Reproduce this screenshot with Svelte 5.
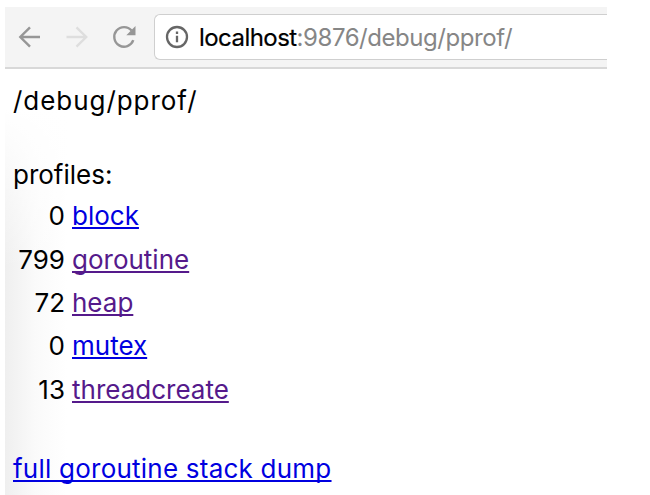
<script lang="ts">
    const host = "localhost";
    const path = ":9876/debug/pprof/";

    const profiles = [
        { name: "block", count: 0, visited: false },
        { name: "goroutine", count: 799, visited: true },
        { name: "heap", count: 72, visited: true },
        { name: "mutex", count: 0, visited: false },
        { name: "threadcreate", count: 13, visited: true },
    ];
</script>

<div class="window">
    <div class="toolbar">
        <svg class="icon back" viewBox="0 0 24 24" width="24" height="24">
            <path d="M23 12H3.5M13 2.3L3.3 12L13 21.7" />
        </svg>
        <svg class="icon forward" viewBox="0 0 24 24" width="24" height="24">
            <path d="M1.5 12H21M11.5 2.3L21.2 12L11.5 21.7" />
        </svg>
        <svg class="icon reload" viewBox="0 0 24 24" width="24" height="24">
            <path d="M21.3 15.2A9.8 9.8 0 1 1 19.6 5.6" />
            <path class="head" d="M23.5 1V10.2H14.3Z" />
        </svg>
        <div class="address">
            <svg class="info" viewBox="0 0 24 24" width="24" height="24">
                <circle cx="12" cy="12" r="10" />
                <path d="M12 10.7V17.3M12 6.5V9" />
            </svg>
            <span class="url"><span class="host">{host}</span>{path}</span>
        </div>
    </div>

    <div class="page">
        <div class="title">/debug/pprof/</div>
        <div class="label">profiles:</div>
        <div class="profiles">
            {#each profiles as profile (profile.name)}
                <span class="count">{profile.count}</span>
                <a class:visited={profile.visited} href="#{profile.name}">{profile.name}</a>
            {/each}
        </div>
        <a class="dump" href="#dump">full goroutine stack dump</a>
    </div>
</div>

<style>
    :global(body) {
        background: #fff;
        overflow: hidden;
    }

    .window {
        box-sizing: border-box;
        width: 607px;
        height: 495px;
        padding: 7px 0 0 5px;
        display: flex;
        flex-direction: column;
        font-family: Inter, "Liberation Sans", sans-serif;
    }

    .toolbar {
        box-sizing: border-box;
        height: 62px;
        flex: none;
        display: flex;
        align-items: center;
        padding-left: 12px;
        background: #f4f4f4;
        border-bottom: 2px solid #d8d8d8;
    }

    .icon {
        flex: none;
        fill: none;
        stroke: #969696;
        stroke-width: 2.4;
    }

    .forward {
        margin-left: 24px;
        stroke: #dedede;
    }

    .reload {
        margin-left: 23px;
    }

    .reload .head {
        fill: #969696;
        stroke: none;
    }

    .address {
        box-sizing: border-box;
        flex: 1;
        height: 46px;
        margin-left: 18px;
        padding-left: 10px;
        display: flex;
        align-items: center;
        background: #fff;
        border: 1.5px solid #cfcfcf;
        border-right: none;
        border-radius: 6px 0 0 6px;
    }

    .info {
        fill: none;
        stroke: #666;
        stroke-width: 2.3;
    }

    .url {
        margin-left: 10px;
        padding-top: 1px;
        font-size: 24px;
        letter-spacing: -0.45px;
        color: #868686;
    }

    .host {
        color: #000;
        letter-spacing: -0.55px;
        -webkit-text-stroke: 0.2px #000;
    }

    .page {
        flex: 1;
        padding: 15px 0 0 8px;
        font-size: 26px;
        line-height: 34px;
        color: #000;
        background:
            linear-gradient(to bottom, #fff 40px, rgba(255, 255, 255, 0) 200px),
            linear-gradient(to right, #efefef, #fafafa 30px, #fff 62px);
    }

    .title {
        letter-spacing: 0.95px;
    }

    .label {
        margin-top: 40px;
    }

    .profiles {
        display: grid;
        grid-template-columns: 52px max-content;
        grid-auto-rows: 43.4px;
        align-items: center;
        column-gap: 7px;
        margin-top: 2.6px;
    }

    .count {
        text-align: right;
    }

    a {
        color: #0000e0;
        text-decoration: underline;
        text-decoration-skip-ink: none;
        text-decoration-thickness: 1.7px;
        text-underline-offset: 2px;
    }

    .visited {
        color: #551a8b;
    }

    .dump {
        display: inline-block;
        margin-top: 40px;
        letter-spacing: 0.23px;
    }
</style>
